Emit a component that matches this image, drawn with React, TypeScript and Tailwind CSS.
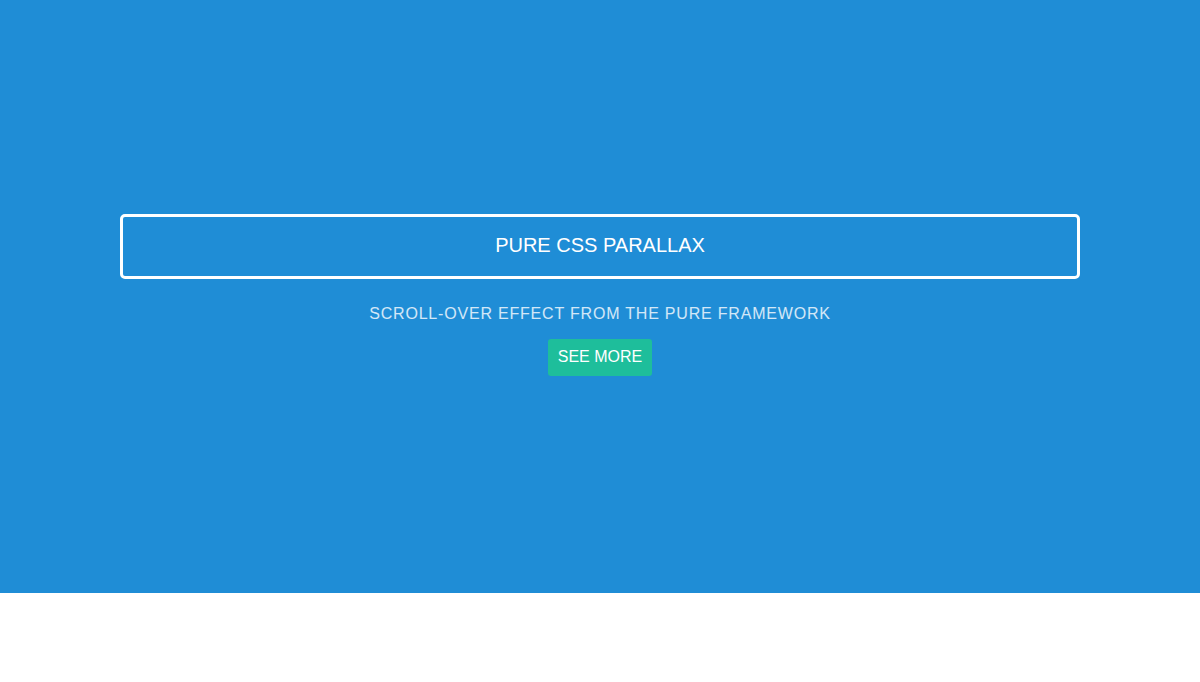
import React from "react";

const App = () => {
  return (
    <div className="min-h-screen bg-white" style={{ fontFamily: '"Liberation Sans", Arial, sans-serif' }}>
      <section className="h-[593px] bg-[#1f8dd6] flex items-center justify-center pb-[4px]">
        <div className="w-[960px] flex flex-col items-center text-white">
          <h1 className="w-full h-[65px] flex items-center justify-center pb-[2px] border-[3px] border-white rounded-[5px] text-[20px] font-normal">
            PURE CSS PARALLAX
          </h1>
          <p className="mt-[25px] text-[16px] leading-[20px] tracking-[0.05em] text-white/80">
            SCROLL-OVER EFFECT FROM THE PURE FRAMEWORK
          </p>
          <button className="mt-[15px] h-[37px] px-[10px] bg-[#1ebe9b] rounded-[3px] text-[16px] text-white">
            SEE MORE
          </button>
        </div>
      </section>
    </div>
  );
};

export default App;
